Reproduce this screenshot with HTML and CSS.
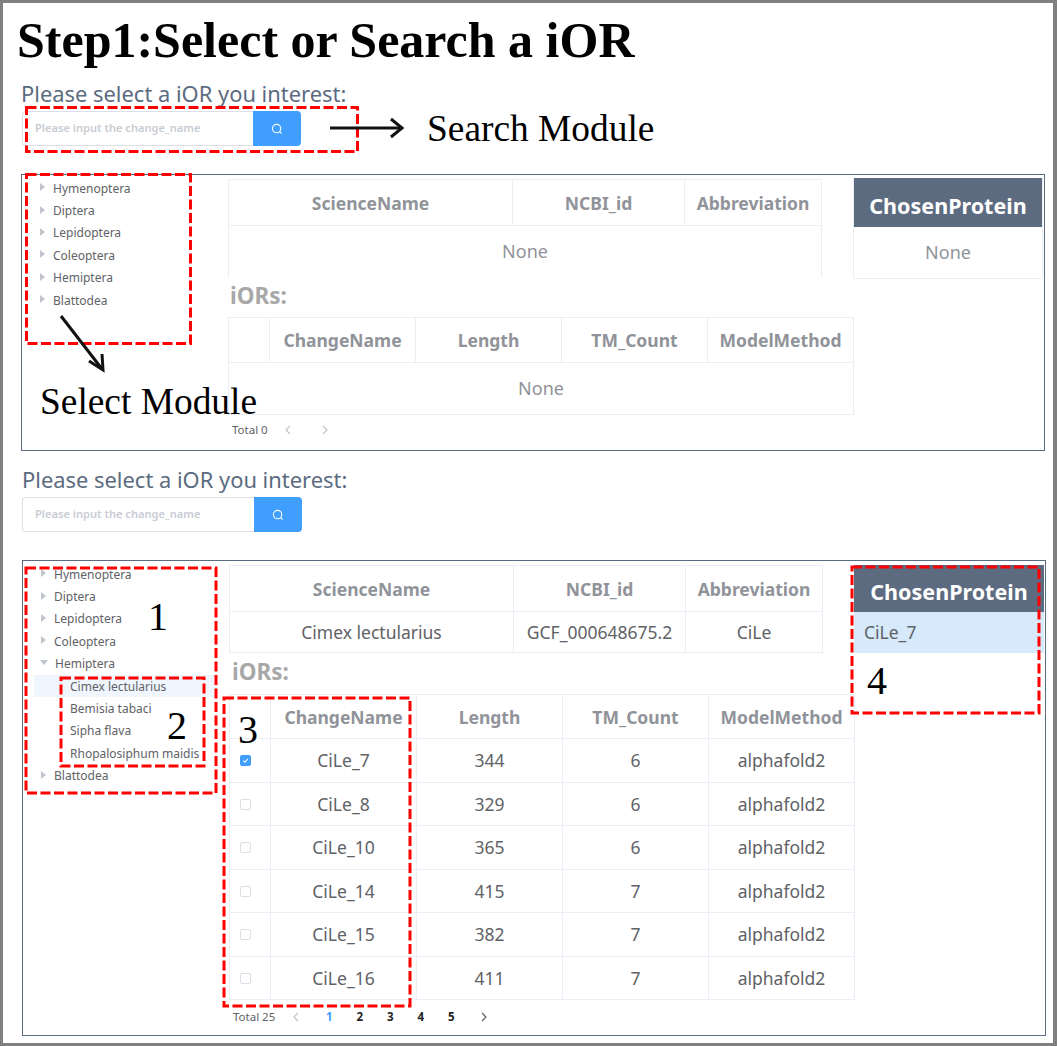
FILE: index.html
```html
<!DOCTYPE html>
<html lang="en">
<head>
<meta charset="utf-8">
<title>Step1: Select or Search a iOR</title>
<link rel="stylesheet" href="styles.css">
</head>
<body>
<main class="figure">
  <h1 class="title">Step1:Select or Search a iOR</h1>

  <section class="step step-empty">
    <h2 class="prompt">Please select a iOR you interest:</h2>
    <div class="search">
      <div class="search-input">Please input the change_name</div>
      <button class="search-btn" type="button" aria-label="Search">
        <svg class="search-icon" viewBox="0 0 12 12"><circle cx="5.6" cy="5.6" r="4.2"/><path d="M8.7 8.7 10.6 10.6"/></svg>
      </button>
    </div>
    <div class="panel">
      <ul class="tree">
        <li class="node"><i class="caret"></i>Hymenoptera</li>
        <li class="node"><i class="caret"></i>Diptera</li>
        <li class="node"><i class="caret"></i>Lepidoptera</li>
        <li class="node"><i class="caret"></i>Coleoptera</li>
        <li class="node"><i class="caret"></i>Hemiptera</li>
        <li class="node"><i class="caret"></i>Blattodea</li>
      </ul>
      <div class="mid">
        <table class="grid species">
          <colgroup><col class="c-sci"><col class="c-ncbi"><col class="c-abbr"></colgroup>
          <thead><tr><th>ScienceName</th><th>NCBI_id</th><th>Abbreviation</th></tr></thead>
          <tbody><tr class="empty-open"><td colspan="3">None</td></tr></tbody>
        </table>
        <h3 class="iors">iORs:</h3>
        <table class="grid receptors">
          <colgroup><col class="c-check"><col class="c-col"><col class="c-col"><col class="c-col"><col class="c-col"></colgroup>
          <thead><tr><th></th><th>ChangeName</th><th>Length</th><th>TM_Count</th><th>ModelMethod</th></tr></thead>
          <tbody><tr class="empty"><td colspan="5">None</td></tr></tbody>
        </table>
        <div class="pager">
          <span class="total">Total 0</span>
          <svg class="chev chev-prev-0 off" viewBox="0 0 8 12"><path d="M6 2 2 6l4 4"/></svg>
          <svg class="chev chev-next-0 off" viewBox="0 0 8 12"><path d="m2 2 4 4-4 4"/></svg>
        </div>
      </div>
      <aside class="chosen">
        <div class="chosen-head">ChosenProtein</div>
        <div class="chosen-none">None</div>
      </aside>
    </div>
  </section>

  <section class="step step-filled">
    <h2 class="prompt">Please select a iOR you interest:</h2>
    <div class="search">
      <div class="search-input">Please input the change_name</div>
      <button class="search-btn" type="button" aria-label="Search">
        <svg class="search-icon" viewBox="0 0 12 12"><circle cx="5.6" cy="5.6" r="4.2"/><path d="M8.7 8.7 10.6 10.6"/></svg>
      </button>
    </div>
    <div class="panel">
      <ul class="tree">
        <li class="node"><i class="caret"></i>Hymenoptera</li>
        <li class="node"><i class="caret"></i>Diptera</li>
        <li class="node"><i class="caret"></i>Lepidoptera</li>
        <li class="node"><i class="caret"></i>Coleoptera</li>
        <li class="node"><i class="caret open"></i>Hemiptera</li>
        <li class="node child active">Cimex lectularius</li>
        <li class="node child">Bemisia tabaci</li>
        <li class="node child">Sipha flava</li>
        <li class="node child">Rhopalosiphum maidis</li>
        <li class="node"><i class="caret"></i>Blattodea</li>
      </ul>
      <div class="mid">
        <table class="grid species">
          <colgroup><col class="c-sci"><col class="c-ncbi"><col class="c-abbr"></colgroup>
          <thead><tr><th>ScienceName</th><th>NCBI_id</th><th>Abbreviation</th></tr></thead>
          <tbody><tr class="species-row"><td>Cimex lectularius</td><td>GCF_000648675.2</td><td>CiLe</td></tr></tbody>
        </table>
        <h3 class="iors">iORs:</h3>
        <table class="grid receptors">
          <colgroup><col class="c-check"><col class="c-col"><col class="c-col"><col class="c-col"><col class="c-col"></colgroup>
          <thead><tr><th></th><th>ChangeName</th><th>Length</th><th>TM_Count</th><th>ModelMethod</th></tr></thead>
          <tbody>
            <tr><td><span class="check on"><svg viewBox="0 0 12 12"><path d="M3 6.2 5.2 8.4 9.2 3.8"/></svg></span></td><td>CiLe_7</td><td>344</td><td>6</td><td>alphafold2</td></tr>
            <tr><td><span class="check"></span></td><td>CiLe_8</td><td>329</td><td>6</td><td>alphafold2</td></tr>
            <tr><td><span class="check"></span></td><td>CiLe_10</td><td>365</td><td>6</td><td>alphafold2</td></tr>
            <tr><td><span class="check"></span></td><td>CiLe_14</td><td>415</td><td>7</td><td>alphafold2</td></tr>
            <tr><td><span class="check"></span></td><td>CiLe_15</td><td>382</td><td>7</td><td>alphafold2</td></tr>
            <tr><td><span class="check"></span></td><td>CiLe_16</td><td>411</td><td>7</td><td>alphafold2</td></tr>
          </tbody>
        </table>
        <div class="pager">
          <span class="total">Total 25</span>
          <svg class="chev chev-prev off" viewBox="0 0 8 12"><path d="M6 2 2 6l4 4"/></svg>
          <span class="page current">1</span>
          <span class="page">2</span>
          <span class="page">3</span>
          <span class="page">4</span>
          <span class="page">5</span>
          <svg class="chev chev-next" viewBox="0 0 8 12"><path d="m2 2 4 4-4 4"/></svg>
        </div>
      </div>
      <aside class="chosen">
        <div class="chosen-head">ChosenProtein</div>
        <div class="chosen-item">CiLe_7</div>
      </aside>
    </div>
  </section>

  <svg class="overlay" viewBox="0 0 1051 1040" aria-hidden="true">
    <g class="dash">
      <rect x="23.5" y="104.5" width="331" height="44"/>
      <rect x="23.5" y="171.5" width="164" height="169"/>
      <rect x="23" y="565" width="190" height="225"/>
      <rect x="58" y="675" width="143" height="88"/>
      <rect x="221" y="695" width="186" height="308"/>
      <rect x="849" y="564" width="187" height="146"/>
    </g>
    <g class="arrow">
      <path d="M327 125H398"/>
      <path d="M388 116 399 125 388 134"/>
      <path d="M58 313 99 366"/>
      <path d="M86 358 100 367 99 351"/>
    </g>
  </svg>
  <span class="note note-search">Search Module</span>
  <span class="note note-select">Select Module</span>
  <span class="note num num-1">1</span>
  <span class="note num num-2">2</span>
  <span class="note num num-3">3</span>
  <span class="note num num-4">4</span>
</main>
</body>
</html>
```
FILE: styles.css
```css
* { box-sizing: border-box; }
html, body { margin: 0; padding: 0; background: #fff; }
.figure {
  position: relative;
  width: 1057px;
  height: 1046px;
  border: 3px solid #808080;
  border-right-width: 4px;
  background: #fff;
  overflow: hidden;
  font-family: "Noto Sans", "Open Sans", sans-serif;
  color: #606266;
}
.title {
  margin: 0;
  height: 74px;
  padding: 7px 0 0 14px;
  font: bold 50px/60px "Liberation Serif", serif;
  color: #000;
}
.step { padding-left: 18px; }
.prompt {
  margin: 3px 0 0;
  height: 28px;
  font-size: 21.9px;
  line-height: 28px;
  font-weight: 400;
  white-space: nowrap;
  color: #5b6b80;
}
.search { display: flex; margin: 3px 0 0 1px; height: 35px; }
.search-input {
  width: 231px;
  padding-left: 12px;
  border: 1px solid #dcdfe6;
  border-right: 0;
  border-radius: 4px 0 0 4px;
  font-size: 11.1px;
  font-weight: 600;
  line-height: 32px;
  white-space: nowrap;
  color: #c8ccd4;
}
.search-btn {
  display: flex;
  align-items: center;
  justify-content: center;
  width: 48px;
  padding: 0;
  border: 0;
  border-radius: 0 4px 4px 0;
  background: #409eff;
}
.search-icon { width: 12px; height: 12px; fill: none; stroke: #fff; stroke-width: 1.1; }
.panel {
  display: flex;
  width: 1024px;
  margin-top: 28px;
  border: 1px solid #5b6b80;
  padding-right: 1px;
}
.step-empty .panel { height: 277px; }
.step-filled { margin-top: 15px; padding-left: 19px; }
.step-filled .prompt { margin-top: 0; }
.step-filled .search { margin-left: 0; }
.step-filled .search-input { width: 232px; }
.step-filled .panel { height: 476px; margin-top: 28px; }
.tree { flex: none; width: 206px; margin: 0; padding: 2px 0 0; list-style: none; }
.node {
  display: flex;
  align-items: center;
  height: 22.4px;
  padding-left: 18px;
  font-size: 12px;
  white-space: nowrap;
  color: #606266;
}
.caret {
  flex: none;
  width: 0;
  height: 0;
  margin-right: 8px;
  border-style: solid;
  border-width: 4px 0 4px 5px;
  border-color: transparent transparent transparent #c0c4cc;
  transform: translateY(-1px);
}
.caret.open { margin-left: -1px; margin-right: 7px; border-width: 5px 4px 0; border-color: #c0c4cc transparent transparent; }
.child { margin: 0 12px 0 11px; padding-left: 36px; }
.active { background: #f0f6fd; }
.mid { flex: none; width: 625px; padding-top: 4px; }
.grid { table-layout: fixed; border-collapse: collapse; }
.grid th, .grid td { padding: 0; border: 1px solid #ebeef5; text-align: center; overflow: hidden; white-space: nowrap; }
.grid th { font-size: 17.5px; font-weight: 700; color: #909399; }
.grid td { font-size: 17.5px; font-weight: 400; color: #606266; }
.species { width: 593px; }
.c-sci { width: 284px; }
.c-ncbi { width: 172px; }
.c-abbr { width: 137px; }
.species th { height: 46px; }
.empty-open td { height: 51px; border-bottom: 0; color: #909399; font-size: 18px; }
.species-row td { height: 41px; }
.iors { margin: 0; height: 40px; padding: 6px 0 0 2px; font-size: 22.5px; line-height: 26px; font-weight: 700; white-space: nowrap; color: #a8a8a8; }
.step-filled .iors { height: 41px; padding: 6px 0 0 3px; }
.receptors { width: 625px; }
.c-check { width: 41px; }
.c-col { width: 146px; }
.receptors th { height: 44px; }
.step-empty .receptors th { height: 45px; }
.receptors tbody tr { height: 43.5px; }
.empty td { height: 52px; color: #909399; font-size: 18px; }
.check {
  display: block;
  width: 11px;
  height: 11px;
  margin: 1px 0 0 10px;
  border: 1px solid #dcdfe6;
  border-radius: 2px;
  background: #fff;
}
.check.on { border-color: #409eff; background: #409eff; }
.check svg { display: block; width: 9px; height: 9px; fill: none; stroke: #fff; stroke-width: 1.4; }
.pager { display: flex; align-items: center; height: 30px; padding-left: 4px; font-size: 11.5px; color: #606266; }
.step-filled .pager { height: 33px; }
.total { width: 47px; white-space: nowrap; }
.chev { flex: none; width: 8px; height: 12px; fill: none; stroke: #606266; stroke-width: 1.2; }
.chev.off { stroke: #c0c4cc; }
.chev-prev-0 { margin-left: 5px; }
.chev-next-0 { margin-left: 29px; }
.chev-prev { margin-left: 12px; }
.chev-next { margin-left: 13px; }
.page { width: 30.5px; text-align: center; font-weight: 700; color: #222; }
.page.current { margin-left: 14px; color: #409eff; }
.chosen { flex: none; width: 190px; border: 1px solid #ebeef5; border-top: 0; align-self: flex-start; margin-top: 3px; }
.chosen-head {
  height: 49px;
  background: #5c6b7f;
  font-size: 21.5px;
  font-weight: 700;
  line-height: 55px;
  text-align: center;
  color: #fff;
}
.chosen-none { height: 51px; font-size: 18px; line-height: 51px; text-align: center; color: #909399; }
.step-filled .chosen { margin-top: 4px; border: 0; }
.step-filled .chosen-head { height: 47px; line-height: 54px; }
.chosen-item { height: 41px; padding-left: 10px; background: #d6eafc; font-size: 17.5px; line-height: 41px; color: #606266; }
.overlay { position: absolute; left: 0; top: 0; width: 1051px; height: 1040px; pointer-events: none; }
.dash rect { fill: none; stroke: #f00; stroke-width: 3; stroke-dasharray: 10 3.5; }
.arrow path { fill: none; stroke: #111; stroke-width: 3; }
.note { position: absolute; font-family: "Liberation Serif", serif; color: #000; white-space: nowrap; }
.note-search { left: 424px; top: 103px; font-size: 37.4px; line-height: 46px; }
.note-select { left: 37px; top: 376px; font-size: 37.4px; line-height: 46px; }
.num { font-size: 40px; line-height: 46px; }
.num-1 { left: 145px; top: 591px; }
.num-2 { left: 164px; top: 700px; }
.num-3 { left: 235px; top: 704px; }
.num-4 { left: 864px; top: 655px; }
```
